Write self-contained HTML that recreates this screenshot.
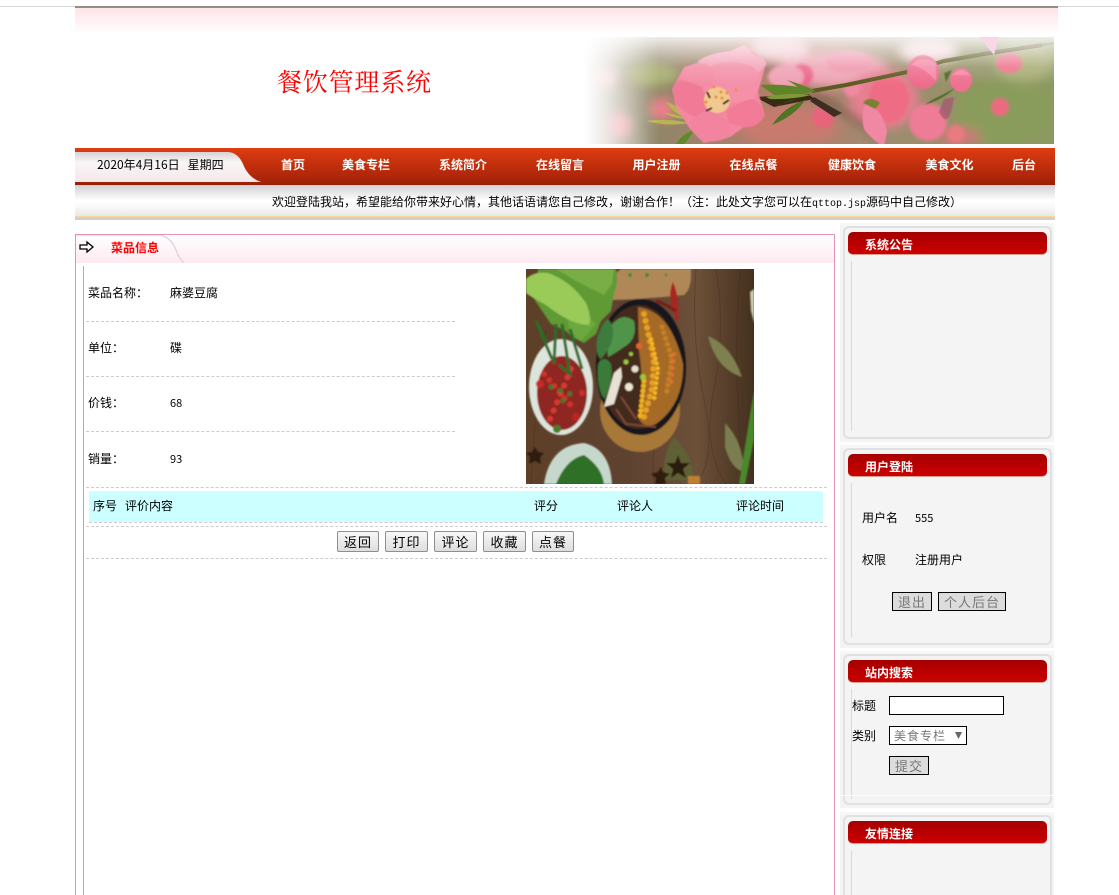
<!DOCTYPE html>
<html lang="zh"><head><meta charset="utf-8"><title>餐饮管理系统</title>
<style>
html,body{margin:0;padding:0;background:#fff;width:1119px;height:895px;overflow:hidden}
#p{position:relative;width:1119px;height:895px;overflow:hidden;font-family:"WenQuanYi Zen Hei","Noto Sans CJK SC",sans-serif;font-size:12px;color:#000}
#p div,#p span.t,#p svg{position:absolute}
.t{position:absolute;white-space:nowrap;line-height:16px}
.n{color:#fff;font-weight:bold;font-size:12px;top:157px}
.d{height:0;border-top:1px dashed #ccc}
.sb{position:absolute;left:840px;width:214px;background:#f4f4f4;box-shadow:0 -3px 0 #f7f7f7}
.sb .o{left:3px;right:2px;top:0;bottom:3px;border:2px solid #e0e0e0;border-radius:6px;box-sizing:border-box}
.sb .h{left:8px;width:199px;top:6px;height:23px;border-radius:5px;background:linear-gradient(#a50000,#cc0000);border-bottom:1px solid #d9a090;box-sizing:border-box}
.sb .ht{position:absolute;left:25px;top:11px;color:#fff;font-weight:bold;font-size:12px;line-height:16px;white-space:nowrap}
.sb .l{left:11px;top:35px;width:1px;background:#d8d8d8}
.b{height:21px;background:linear-gradient(#f8f8f8,#dedede);border:1px solid #8f8f8f;border-radius:2px;box-sizing:border-box;text-align:center;font-size:13px;line-height:19px;letter-spacing:1px;top:531px}
.g{background:#dcdcdc;border:1px solid #000;box-sizing:border-box;color:#777;text-align:center;font-size:13px;line-height:17px;letter-spacing:1px;height:19px}
</style></head><body><div id="p">

<div style="left:0;top:6px;width:1119px;height:1px;background:#d8d8d8"></div>
<div style="left:75px;top:6px;width:983px;height:2px;background:#8f8f88"></div>
<div style="left:75px;top:8px;width:983px;height:26px;background:linear-gradient(#ffe3e7,#fff)"></div>
<span class="t" style="left:277px;top:64px;font-family:'Noto Serif CJK SC',serif;font-size:25px;line-height:34px;color:#f00;letter-spacing:.8px">餐饮管理系统</span>

<svg style="left:584px;top:37px" width="470" height="107" viewBox="0 0 470 107">
<defs>
<linearGradient id="fade" x1="0" x2="1" y1="0" y2="0"><stop offset="0" stop-color="#fff"/><stop offset=".05" stop-color="#fff" stop-opacity=".7"/><stop offset=".16" stop-color="#fff" stop-opacity="0"/></linearGradient>
<linearGradient id="bgg" x1="0" x2="1" y1="0" y2="0"><stop offset="0" stop-color="#c8bcb0"/><stop offset=".14" stop-color="#8e8668"/><stop offset=".42" stop-color="#b87c6c"/><stop offset=".62" stop-color="#a08a70"/><stop offset="1" stop-color="#8a9a60"/></linearGradient>
<linearGradient id="tf" x1="0" x2="0" y1="0" y2="1"><stop offset="0" stop-color="#fff" stop-opacity=".85"/><stop offset=".28" stop-color="#fff" stop-opacity=".15"/><stop offset=".45" stop-color="#fff" stop-opacity="0"/></linearGradient>
<filter id="b1" x="-40%" y="-40%" width="180%" height="180%"><feGaussianBlur stdDeviation="5"/></filter>
<filter id="b2" x="-30%" y="-30%" width="160%" height="160%"><feGaussianBlur stdDeviation="1.600"/></filter>
<filter id="b3" x="-10%" y="-10%" width="120%" height="120%"><feGaussianBlur stdDeviation=".5"/></filter>
</defs>
<rect width="470" height="107" fill="url(#bgg)"/>
<g filter="url(#b1)">
<ellipse cx="68" cy="38" rx="26" ry="12" fill="#a8ad70"/><ellipse cx="35" cy="88" rx="12" ry="12" fill="#f0a0a8"/><ellipse cx="78" cy="72" rx="13" ry="12" fill="#e8808a"/><ellipse cx="20" cy="40" rx="12" ry="10" fill="#f0c0c0"/>
<ellipse cx="205" cy="90" rx="50" ry="18" fill="#c87a6e"/><ellipse cx="250" cy="32" rx="55" ry="18" fill="#eea4b4"/><ellipse cx="300" cy="62" rx="35" ry="30" fill="#e67f90"/><ellipse cx="345" cy="14" rx="30" ry="12" fill="#f4d8dc"/>
<ellipse cx="420" cy="75" rx="50" ry="34" fill="#8a9c5c"/><ellipse cx="195" cy="12" rx="30" ry="12" fill="#f2c8d0"/><ellipse cx="440" cy="25" rx="30" ry="20" fill="#a8ac74"/><ellipse cx="375" cy="100" rx="22" ry="10" fill="#c87a74"/>
<path d="M165 20 L228 55 L296 98" stroke="#4a3a28" stroke-width="6" fill="none" opacity=".6"/>
</g>
<g filter="url(#b2)">
<circle cx="239" cy="80" r="11" fill="#e8647c"/><circle cx="416" cy="70" r="9" fill="#ec6a80"/><ellipse cx="425" cy="26" rx="13" ry="10" fill="#f0708c"/>
<circle cx="218" cy="38" r="11" fill="#ea6488"/><ellipse cx="265" cy="25" rx="23" ry="11" fill="#f095ac"/><circle cx="344" cy="85" r="19" fill="#ee7c96"/><ellipse cx="305" cy="62" rx="20" ry="24" fill="#ee6c84"/>
<circle cx="372" cy="97" r="9" fill="#e87a80"/><ellipse cx="202" cy="40" rx="18" ry="12" fill="#f0a0b4"/><circle cx="268" cy="52" r="8" fill="#f088a0"/>
</g>
<path d="M228 54 L262 48 L323 35 L360 24 L400 17 L458 8" stroke="#5c5a20" stroke-width="4" fill="none"/>
<path d="M400 17 L470 6" stroke="#6a5a40" stroke-width="2" fill="none"/>
<path d="M171 60 L225 57 L230 62 L190 70Z" fill="#3a2c14"/>
<path d="M230 60 L258 76 L250 80 L226 64Z" fill="#3c2e20"/>
<path d="M176 48 Q205 46 232 54 Q210 60 190 58Z M203 43 Q220 48 232 54 L214 50Z" fill="#5f8528"/>
<path d="M182 60 Q205 55 228 58 Q205 63 186 62Z" fill="#7c9838"/>
<path d="M188 88 Q200 70 221 63 Q212 78 188 88Z M186 73 Q200 65 215 61 L195 68Z" fill="#4f7424"/>
<path d="M62 84 Q85 81 105 86 Q85 90 62 84Z M82 65 Q95 68 106 82 Q90 78 82 65Z M80 76 Q90 76 104 82 Q90 82 80 76Z" fill="#b6b650"/>
<path d="M92 107 Q98 97 110 93 Q105 102 100 107Z" fill="#5f8a28"/>
<g filter="url(#b3)">
<path d="M88 52 L100 30 L146 16 L163 8 L182 26 L174 55 L181 78 L160 90 L146 100 L120 106 L106 92 L92 70Z" fill="#f488a2"/>
<path d="M114 24 Q125 16 146 14 L160 8 L170 18 Q184 22 182 28 L172 38 L150 50 L120 40Z" fill="#f3a0b6"/>
<path d="M97 40 Q100 28 116 26 Q132 28 134 40 L128 58 L100 52Z" fill="#f48ca4"/>
<path d="M128 28 Q146 22 165 28 Q178 34 176 48 L170 62 L148 66 L130 52Z" fill="#f490a8"/>
<path d="M89 50 Q92 42 100 43 L118 50 L126 70 L112 80 Q95 74 90 62Z" fill="#f17a96"/>
<path d="M142 74 Q160 62 170 62 Q182 72 180 80 Q172 92 158 90 L145 86Z" fill="#f27b98"/>
<path d="M105 84 L124 72 L144 84 Q150 92 145 100 Q128 108 116 102 Q106 94 105 84Z" fill="#f284a0"/>
<ellipse cx="133" cy="63" rx="13" ry="13" fill="#f0c890"/>
<path d="M123 55l3 6M145 63l-6 4M122 74l6-3" stroke="#4a2a18" stroke-width="2"/>
<circle cx="130" cy="50" r="1.500" fill="#f09020"/><circle cx="137" cy="55" r="1.500" fill="#f09020"/><circle cx="143" cy="56" r="1.500" fill="#f09020"/><circle cx="152" cy="53" r="1.500" fill="#f09020"/><circle cx="122" cy="65" r="1.500" fill="#f09020"/><circle cx="132" cy="60" r="1.500" fill="#f09020"/><circle cx="138" cy="61" r="1.500" fill="#f09020"/>
<path d="M283 65 Q300 75 303 95 L300 110 Q285 100 280 92 Q276 75 283 65Z" fill="#f088a4"/>
<path d="M279 66 Q285 58 296 66 L291 72Z" fill="#7a8030"/>
<ellipse cx="339" cy="35" rx="16" ry="17" fill="#ee6c8c"/><path d="M327 28 Q338 18 352 26 L352 44 Q340 30 327 28Z" fill="#f68aa8"/>
<ellipse cx="377" cy="43" rx="11" ry="12" fill="#ef6f90"/><path d="M368 38 Q378 28 386 38Z" fill="#f48aa6"/>
<path d="M350 62 Q365 55 372 50 Q360 62 340 68Z M360 36 L368 33 L362 45Z" fill="#4a6a22"/>
<path d="M355 75 Q365 95 370 60 L360 62Z" fill="#a55a72" opacity=".8"/>
</g>
<rect width="470" height="107" fill="url(#fade)"/><rect width="470" height="107" fill="url(#tf)"/>
<path d="M395 0 L415 0 L410 18Z" fill="#f8d8e4"/>
</svg>

<div style="left:75px;top:148px;width:980px;height:37px;background:linear-gradient(#e03c10 0,#d53810 15%,#a92408 85%,#982005 100%)"></div>
<svg style="left:75px;top:152px" width="190" height="31" viewBox="0 0 190 31"><defs><linearGradient id="ng" x1="0" x2="0" y1="0" y2="1"><stop offset="0" stop-color="#d8d2d4"/><stop offset=".35" stop-color="#f8f6f6"/><stop offset="1" stop-color="#f6e6ea"/></linearGradient></defs><path d="M0 0H152C160 0 165 5 168 12 172 22 178 27 186 30H0Z" fill="url(#ng)"/></svg>
<span class="t" style="left:97px;top:157px">2020年4月16日&nbsp;&nbsp;&nbsp;星期四</span>
<span class="t n" style="left:281px">首页</span><span class="t n" style="left:342px">美食专栏</span><span class="t n" style="left:439px">系统简介</span><span class="t n" style="left:536px">在线留言</span><span class="t n" style="left:632.500px">用户注册</span><span class="t n" style="left:729.500px">在线点餐</span><span class="t n" style="left:828px">健康饮食</span><span class="t n" style="left:925.500px">美食文化</span><span class="t n" style="left:1012px">后台</span>

<div style="left:75px;top:185px;width:980px;height:31px;background:linear-gradient(#d0d0d2 0,#e8e8ea 25%,#fff 50%,#f8f8f8 72%,#e8e8e8 100%)"></div>
<div style="left:75px;top:216px;width:980px;height:1px;background:#fbd99a"></div>
<div style="left:75px;top:217px;width:980px;height:3px;background:#d0d0d0"></div>
<span class="t" style="left:272px;top:194px">欢迎登陆我站，希望能给你带来好心情，其他话语请您自己修改，谢谢合作！（注：此处文字您可以在<span style="font-family:'Liberation Mono',monospace;font-size:10px">qttop.jsp</span>源码中自己修改）</span>

<div style="left:75px;top:234px;width:760px;height:661px;border:1px solid #e591b6;border-bottom:0;box-sizing:border-box"></div>
<div style="left:76px;top:235px;width:758px;height:28px;background:linear-gradient(#fff,#fdeaf0)"></div>
<svg style="left:76px;top:235px" width="110" height="28" viewBox="0 0 110 28"><path d="M0 0H84C96 3 99 12 102 20 104 24 106 26 108 28" fill="none" stroke="#d8c8d8" stroke-width="1"/><path d="M4 10H11V7L17 12 11 17V14H4Z" fill="#fff" stroke="#000" stroke-width="1.300"/></svg>
<span class="t" style="left:111px;top:240px;color:#f00;font-weight:bold;font-size:12px">菜品信息</span>
<div style="left:83px;top:266px;width:1px;height:629px;background:#e591b6"></div>

<span class="t" style="left:88px;top:285px">菜品名称：</span><span class="t" style="left:170px;top:285px">麻婆豆腐</span>
<div class="d" style="left:86px;top:321px;width:369px"></div>
<span class="t" style="left:88px;top:340px">单位：</span><span class="t" style="left:170px;top:340px">碟</span>
<div class="d" style="left:86px;top:376px;width:369px"></div>
<span class="t" style="left:88px;top:395px">价钱：</span><span class="t" style="left:170px;top:395px;font-size:11px">68</span>
<div class="d" style="left:86px;top:431px;width:369px"></div>
<span class="t" style="left:88px;top:451px">销量：</span><span class="t" style="left:170px;top:451px;font-size:11px">93</span>
<div class="d" style="left:86px;top:487px;width:741px"></div>

<svg style="left:526px;top:269px" width="228" height="215" viewBox="0 0 228 215">
<defs><filter id="s1" x="-5%" y="-5%" width="110%" height="110%"><feGaussianBlur stdDeviation=".8"/></filter>
<linearGradient id="w" x1="0" x2="1"><stop offset="0" stop-color="#5e4028"/><stop offset=".45" stop-color="#5e4230"/><stop offset=".75" stop-color="#6c5038"/><stop offset="1" stop-color="#44301e"/></linearGradient></defs>
<rect width="228" height="215" fill="url(#w)"/>
<g fill="none" stroke="#3e2a1a" stroke-width="1" opacity=".35"><path d="M170 0Q165 70 178 130T170 215M190 0Q200 60 188 120T200 215M20 60Q10 120 5 215M130 170Q125 190 128 215M215 0Q205 80 218 215"/></g>
<g filter="url(#s1)">
<path d="M87 29L91 3 95 0H165Q166 20 158 26 120 30 87 31Z" fill="#b08858"/>
<circle cx="104" cy="6" r="2" fill="#3c8a30"/><circle cx="121" cy="6" r="2" fill="#3c8a30"/><circle cx="140" cy="6" r="1.500" fill="#5a8a30"/>
<path d="M147 13Q154 28 152 54 147 45 144 30 144 18 147 13Z" fill="#a82820"/>
<path d="M150 42L140 36 130 32" stroke="#7c1c18" stroke-width="3" fill="none"/>
<path d="M12 0H90Q93 12 88 25L85 42 75 52 70 65 58 74 46 68 40 62 25 55 8 30Z" fill="#5e9a34"/>
<path d="M30 0H88L86 15 78 26 50 12Z" fill="#78ae44"/>
<path d="M40 25L70 55 55 72 43 62Z" fill="#6ca83c"/>
<path d="M0 10Q8 2 22 4 45 12 60 34 66 48 63 56 45 56 20 36 5 28 0 24Z" fill="#9aca58"/>
<ellipse cx="114" cy="142" rx="40" ry="41" fill="#a87838"/>
<ellipse cx="115" cy="98" rx="45" ry="68" fill="#15151a"/>
<ellipse cx="113" cy="98" rx="40" ry="62" fill="#43291f"/>
<path d="M112 38Q145 42 157 95 158 135 130 155 118 160 113 150 118 110 113 82Z" fill="#a56a28"/>
<path d="M118 45L128 90 126 120 118 148" stroke="#e8a020" stroke-width="6" stroke-dasharray="0 7" stroke-linecap="round" fill="none"/>
<path d="M125 70L132 100 128 132" stroke="#f6b820" stroke-width="4" stroke-dasharray="0 5" stroke-linecap="round" fill="none"/>
<path d="M136 58L146 90 140 128" stroke="#c88028" stroke-width="5" stroke-dasharray="0 6" stroke-linecap="round" fill="none"/>
<path d="M118 112L114 148" stroke="#f0b020" stroke-width="5" stroke-dasharray="0 5" stroke-linecap="round" fill="none"/>
<path d="M148 85L145 118" stroke="#e07030" stroke-width="4" stroke-dasharray="0 7" stroke-linecap="round" fill="none"/>
<path d="M84 58Q96 42 108 52 112 70 98 78 88 85 82 88 80 70 84 58Z" fill="#4f9448"/>
<path d="M71 70Q75 55 82 50 90 58 85 75 78 88 74 90 69 82 71 70Z" fill="#3e7c3c"/>
<path d="M72 95Q78 85 85 95 88 112 78 130 70 118 72 95Z" fill="#3a7a38"/>
<path d="M88 104L95 98 96 108 88 135 78 138Z" fill="#e8e2d4"/>
<circle cx="103" cy="118" r="4" fill="#efe8d0"/><circle cx="109" cy="100" r="3.500" fill="#e8e0d0"/>
<circle cx="100" cy="93" r="2.500" fill="#9cc83c"/><circle cx="117" cy="108" r="3" fill="#9cc83c"/><circle cx="113" cy="77" r="3" fill="#e86030"/><circle cx="105" cy="85" r="2" fill="#9cc83c"/>
<path d="M90 140L100 155 130 158M95 128L110 150" stroke="#7a4a38" stroke-width="2" fill="none"/>
<ellipse cx="35" cy="118" rx="32" ry="48" fill="#dde4dc"/>
<ellipse cx="36" cy="124" rx="25" ry="37" fill="#8e2622"/>
<path d="M18 105L48 140" stroke="#cc3028" stroke-width="6" stroke-dasharray="0 8" stroke-linecap="round" fill="none"/>
<path d="M45 100L24 150" stroke="#d83830" stroke-width="6" stroke-dasharray="0 9" stroke-linecap="round" fill="none"/>
<path d="M25 118L44 125 30 138" stroke="#3e7a2a" stroke-width="5" stroke-dasharray="0 10" stroke-linecap="round" fill="none"/>
<circle cx="14" cy="115" r="4" fill="#c82c28"/><circle cx="31" cy="160" r="4" fill="#4a7c2c"/><circle cx="50" cy="148" r="4" fill="#b82824"/><circle cx="56" cy="124" r="3" fill="#c83028"/>
<path d="M20 72L10 52 26 90M30 55L28 95M36 55L44 105 33 96M44 60L56 100" stroke="#2f6a26" stroke-width="3" fill="none"/>
<path d="M18 215Q24 176 58 174 84 180 86 215Z" fill="#c6d8cc"/>
<path d="M30 215Q40 190 58 186 76 198 78 215Z" fill="#2f7028"/>
<path d="M182 67Q205 76 216 108 190 100 182 67Z" fill="#7e8050"/>
<path d="M199 154Q217 172 218 203 205 200 199 178Z" fill="#7a7e50"/>
<path d="M228 121L213 215H219L228 170Z" fill="#468a2c"/>
<path d="M224 23L228 20V54L225 42Z" fill="#c8d0b0"/>
<path d="M148 168Q166 185 168 211H138Q136 185 148 168Z" fill="#5e6034"/>
<path d="M152 186l3 8 9 0-7 6 3 9-8-5-7 5 2-9-7-6 9 0z" fill="#2c1a10"/>
<path d="M135 198l2 5 7 2-5 4 1 6h-11l1-6-5-4 7-2zM9 178l3 5 6 1-4 4 1 7-6-3-6 3 1-7-4-4 6-1z" fill="#2e1c10"/>
<rect x="162" y="207" width="12" height="8" fill="#c08030"/>
</g>
</svg>

<div style="left:89px;top:491px;width:734px;height:31px;background:#ccffff"></div>
<div class="d" style="left:89px;top:522px;width:734px"></div>
<span class="t" style="left:93px;top:498px;font-size:12px">序号</span><span class="t" style="left:125px;top:498px;font-size:12px">评价内容</span><span class="t" style="left:534px;top:498px;font-size:12px">评分</span><span class="t" style="left:617px;top:498px;font-size:12px">评论人</span><span class="t" style="left:736px;top:498px;font-size:12px">评论时间</span>
<div class="d" style="left:86px;top:526px;width:741px"></div>
<div class="b" style="left:337px;width:42px">返回</div><div class="b" style="left:385px;width:43px">打印</div><div class="b" style="left:434px;width:43px">评论</div><div class="b" style="left:483px;width:43px">收藏</div><div class="b" style="left:532px;width:42px">点餐</div>
<div class="d" style="left:86px;top:558px;width:741px"></div>

<div class="sb" style="top:226px;height:216px"><div class="o"></div><div class="h"></div><span class="ht">系统公告</span><div class="l" style="height:170px"></div></div>

<div class="sb" style="top:448px;height:200px"><div class="o"></div><div class="h"></div><span class="ht">用户登陆</span><div class="l" style="height:155px"></div>
<span class="t" style="left:22px;top:62px">用户名</span><span class="t" style="left:75px;top:62px;font-size:11px">555</span>
<span class="t" style="left:22px;top:104px">权限</span><span class="t" style="left:75px;top:104px">注册用户</span>
<div class="g" style="left:52px;top:144px;width:40px">退出</div><div class="g" style="left:98px;top:144px;width:68px">个人后台</div></div>

<div class="sb" style="top:654px;height:154px"><div class="o"></div><div class="h"></div><span class="ht">站内搜索</span><div class="l" style="height:110px"></div>
<span class="t" style="left:12px;top:44px">标题</span><div style="left:49px;top:42px;width:115px;height:19px;background:#fff;border:1px solid #000;box-sizing:border-box"></div>
<span class="t" style="left:12px;top:74px">类别</span><div style="left:49px;top:72px;width:78px;height:19px;background:#fff;border:1px solid #000;box-sizing:border-box;color:#777;font-size:12px;line-height:17px;padding-left:4px;letter-spacing:1px;white-space:nowrap">美食专栏</div>
<svg style="left:114px;top:78px" width="9" height="7" viewBox="0 0 9 7"><path d="M1 0H8L4.500 7Z" fill="#666"/></svg>
<div class="g" style="left:49px;top:102px;width:40px">提交</div>
<div style="left:0;top:141px;width:214px;height:1px;background:#fff"></div></div>

<div class="sb" style="top:815px;height:90px"><div class="o"></div><div class="h"></div><span class="ht">友情连接</span><div class="l" style="height:60px"></div></div>
</div></body></html>
